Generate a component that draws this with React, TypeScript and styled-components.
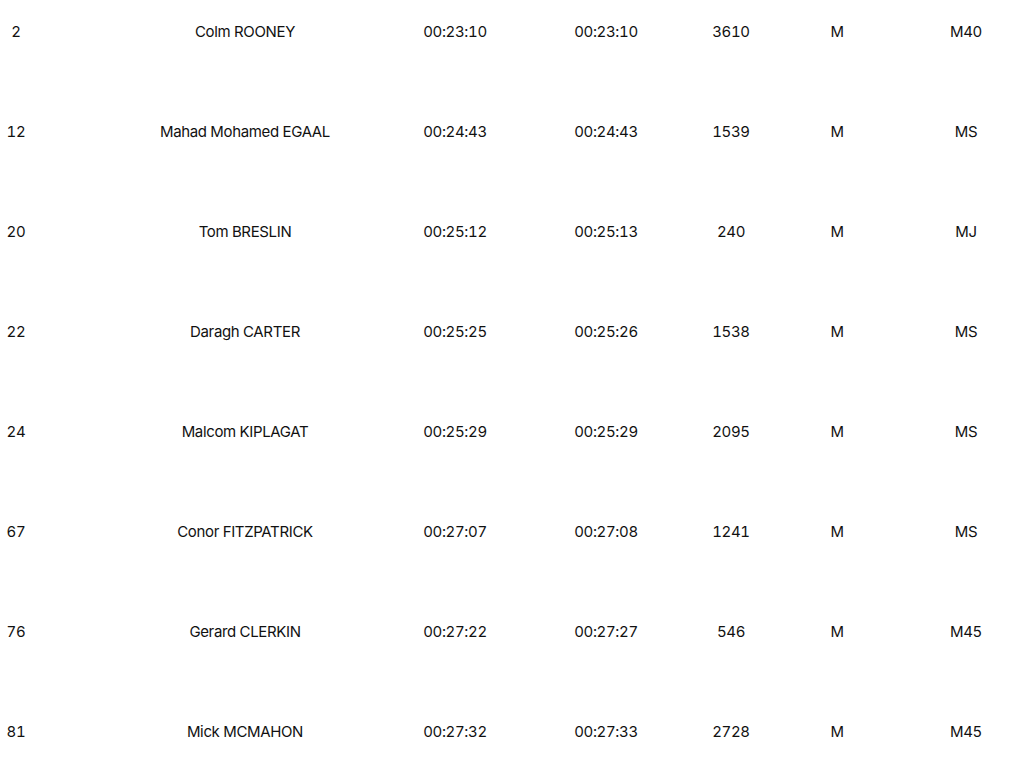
import React from 'react';
import styled, { createGlobalStyle } from 'styled-components';

const GlobalStyle = createGlobalStyle`
  html, body {
    margin: 0;
    padding: 0;
    background: #ffffff;
    overflow: hidden;
  }
  body {
    font-family: Inter, "Noto Sans", "Liberation Sans", sans-serif;
    color: #111111;
  }
`;

const ResultsTable = styled.div`
  display: flex;
  flex-direction: column;
  width: 1014px;
`;

const Row = styled.div`
  display: grid;
  grid-template-columns: 110px 270px 150px 152px 98px 138px 96px;
  align-items: start;
  height: 100px;
  padding-top: 22px;
  box-sizing: border-box;
`;

const Cell = styled.div<{ $padRight?: number }>`
  text-align: center;
  font-size: 15px;
  line-height: 20px;
  letter-spacing: -0.35px;
  font-variant-numeric: tabular-nums;
  white-space: nowrap;
  padding-right: ${p => p.$padRight || 0}px;
`;

interface Result {
  pos: number;
  name: string;
  gun: string;
  chip: string;
  bib: number;
  gender: string;
  category: string;
}

const results: Result[] = [
  { pos: 2, name: 'Colm ROONEY', gun: '00:23:10', chip: '00:23:10', bib: 3610, gender: 'M', category: 'M40' },
  { pos: 12, name: 'Mahad Mohamed EGAAL', gun: '00:24:43', chip: '00:24:43', bib: 1539, gender: 'M', category: 'MS' },
  { pos: 20, name: 'Tom BRESLIN', gun: '00:25:12', chip: '00:25:13', bib: 240, gender: 'M', category: 'MJ' },
  { pos: 22, name: 'Daragh CARTER', gun: '00:25:25', chip: '00:25:26', bib: 1538, gender: 'M', category: 'MS' },
  { pos: 24, name: 'Malcom KIPLAGAT', gun: '00:25:29', chip: '00:25:29', bib: 2095, gender: 'M', category: 'MS' },
  { pos: 67, name: 'Conor FITZPATRICK', gun: '00:27:07', chip: '00:27:08', bib: 1241, gender: 'M', category: 'MS' },
  { pos: 76, name: 'Gerard CLERKIN', gun: '00:27:22', chip: '00:27:27', bib: 546, gender: 'M', category: 'M45' },
  { pos: 81, name: 'Mick MCMAHON', gun: '00:27:32', chip: '00:27:33', bib: 2728, gender: 'M', category: 'M45' },
];

const App: React.FC = () => {
  return (
    <>
      <GlobalStyle />
      <ResultsTable>
        {results.map(r => (
          <Row key={r.pos}>
            <Cell $padRight={78}>{r.pos}</Cell>
            <Cell>{r.name}</Cell>
            <Cell>{r.gun}</Cell>
            <Cell>{r.chip}</Cell>
            <Cell>{r.bib}</Cell>
            <Cell $padRight={24}>{r.gender}</Cell>
            <Cell>{r.category}</Cell>
          </Row>
        ))}
      </ResultsTable>
    </>
  );
};

export default App;
